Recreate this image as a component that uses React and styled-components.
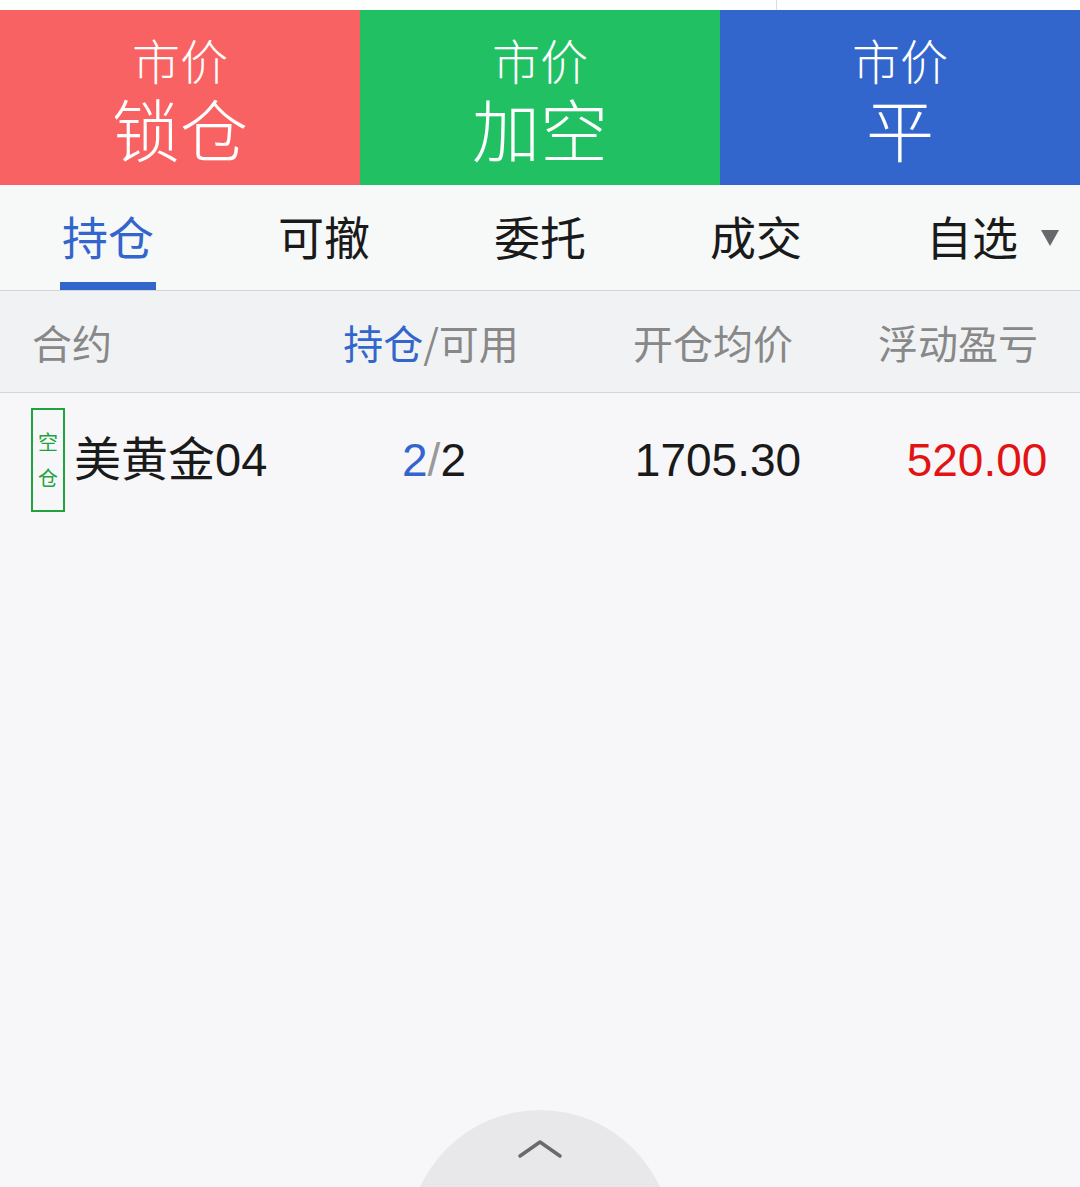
import React from "react";
import styled, { createGlobalStyle } from "styled-components";

const Global = createGlobalStyle`
  html, body { margin: 0; padding: 0; background: #f7f7f9; }
  body { font-family: "Liberation Sans", "Noto Sans CJK SC", sans-serif; }
  * { box-sizing: border-box; }
`;

const Page = styled.div`
  position: relative;
  width: 1080px;
  height: 1187px;
  overflow: hidden;
  background: #f7f7f9;
`;

const TopStrip = styled.div`
  height: 10px;
  background: #fdfefe;
  display: grid;
  grid-template-columns: 776px 1px 1fr;
`;

const StripLine = styled.div`
  grid-column: 2;
  background: #dcdcdc;
`;

const ActionRow = styled.div`
  display: grid;
  grid-template-columns: 360px 360px 360px;
  height: 175px;
`;

const ActionButton = styled.div`
  background: ${(p) => p.$bg};
  color: #ffffff;
  display: flex;
  flex-direction: column;
  align-items: center;
  padding-top: 28px;
  font-family: "Liberation Sans", "Noto Sans CJK SC", sans-serif;
`;

const ActionSmall = styled.div`
  font-size: 48px;
  line-height: 52px;
  font-weight: 300;
`;

const ActionBig = styled.div`
  margin-top: 7px;
  font-size: 68px;
  line-height: 72px;
  font-weight: 300;
`;

const TabBar = styled.div`
  display: grid;
  grid-template-columns: repeat(5, 216px);
  height: 106px;
  background: #f7f8f8;
  border-bottom: 1px solid #d4d5d6;
`;

const Tab = styled.div`
  position: relative;
  display: flex;
  justify-content: center;
  padding-top: 18px;
  font-family: "Noto Sans CJK SC", sans-serif;
  font-size: 46px;
  line-height: 64px;
  color: ${(p) => (p.$active ? "#3366cc" : "#1a1a1a")};
`;

const TabLabel = styled.span`
  position: relative;
`;

const Underline = styled.div`
  position: absolute;
  left: -2px;
  right: -2px;
  top: 79px;
  height: 8px;
  background: #3366cc;
`;

const Caret = styled.div`
  position: absolute;
  left: 115px;
  top: 27px;
  width: 0;
  height: 0;
  border-left: 9px solid transparent;
  border-right: 9px solid transparent;
  border-top: 16px solid #66686c;
`;

const Grid = styled.div`
  display: grid;
  grid-template-columns: 290px 282px 286px 1fr;
  align-items: center;
`;

const HeaderRow = styled(Grid)`
  height: 102px;
  background: #f1f2f3;
  border-bottom: 1px solid #d4d5d6;
  font-family: "Noto Sans CJK SC", sans-serif;
  font-size: 40px;
  color: #888888;
`;

const HeadCell = styled.div`
  text-align: ${(p) => p.$align || "center"};
  padding-left: ${(p) => (p.$align === "left" ? "32px" : "0")};
  line-height: 56px;
  transform: translateX(${(p) => p.$dx || "0px"});
`;

const Blue = styled.span`
  color: #3366cc;
`;

const DataRow = styled(Grid)`
  height: 134px;
  font-size: 46px;
  color: #1a1a1a;
`;

const NameCell = styled.div`
  display: flex;
  align-items: center;
  padding-left: 31px;
  gap: 9px;
`;

const Badge = styled.div`
  width: 34px;
  height: 104px;
  border: 2px solid #1fa33e;
  color: #1fa33e;
  font-family: "Noto Sans CJK SC", sans-serif;
  font-size: 20px;
  line-height: 28px;
  display: flex;
  flex-direction: column;
  align-items: center;
  justify-content: center;
  gap: 8px;
`;

const Name = styled.span`
  font-family: "Liberation Sans", "Noto Sans CJK SC", sans-serif;
  font-size: 47px;
  line-height: 56px;
`;

const Cell = styled.div`
  text-align: center;
  line-height: 56px;
  color: ${(p) => p.$color || "#1a1a1a"};
  transform: translateX(${(p) => p.$dx || "0px"});
`;

const Slash = styled.span`
  color: #999999;
`;

const PullUp = styled.div`
  position: absolute;
  left: 408px;
  top: 1110px;
  width: 264px;
  height: 264px;
  border-radius: 50%;
  background: #e8e8ea;
  display: flex;
  justify-content: center;
  padding-top: 28px;
`;

export default function App() {
  return (
    <Page>
      <Global />
      <TopStrip>
        <StripLine />
      </TopStrip>
      <ActionRow>
        <ActionButton $bg="#f96262">
          <ActionSmall>市价</ActionSmall>
          <ActionBig>锁仓</ActionBig>
        </ActionButton>
        <ActionButton $bg="#21c163">
          <ActionSmall>市价</ActionSmall>
          <ActionBig>加空</ActionBig>
        </ActionButton>
        <ActionButton $bg="#3366cc">
          <ActionSmall>市价</ActionSmall>
          <ActionBig>平</ActionBig>
        </ActionButton>
      </ActionRow>
      <TabBar>
        <Tab $active>
          <TabLabel>
            持仓
            <Underline />
          </TabLabel>
        </Tab>
        <Tab>可撤</Tab>
        <Tab>委托</Tab>
        <Tab>成交</Tab>
        <Tab>
          <TabLabel>
            自选
            <Caret />
          </TabLabel>
        </Tab>
      </TabBar>
      <HeaderRow>
        <HeadCell $align="left">合约</HeadCell>
        <HeadCell $dx="0px">
          <Blue>持仓</Blue>/可用
        </HeadCell>
        <HeadCell $dx="-2px">开仓均价</HeadCell>
        <HeadCell $dx="-11px">浮动盈亏</HeadCell>
      </HeaderRow>
      <DataRow>
        <NameCell>
          <Badge>
            <span>空</span>
            <span>仓</span>
          </Badge>
          <Name>美黄金04</Name>
        </NameCell>
        <Cell $dx="3px">
          <Blue>2</Blue>
          <Slash>/</Slash>2
        </Cell>
        <Cell $dx="3px">1705.30</Cell>
        <Cell $color="#e21313" $dx="8px">520.00</Cell>
      </DataRow>
      <PullUp>
        <svg width="46" height="22" viewBox="0 0 46 22">
          <polyline
            points="3,18 23,4 43,18"
            fill="none"
            stroke="#6a6a6e"
            strokeWidth="3.5"
            strokeLinecap="round"
            strokeLinejoin="round"
          />
        </svg>
      </PullUp>
    </Page>
  );
}
